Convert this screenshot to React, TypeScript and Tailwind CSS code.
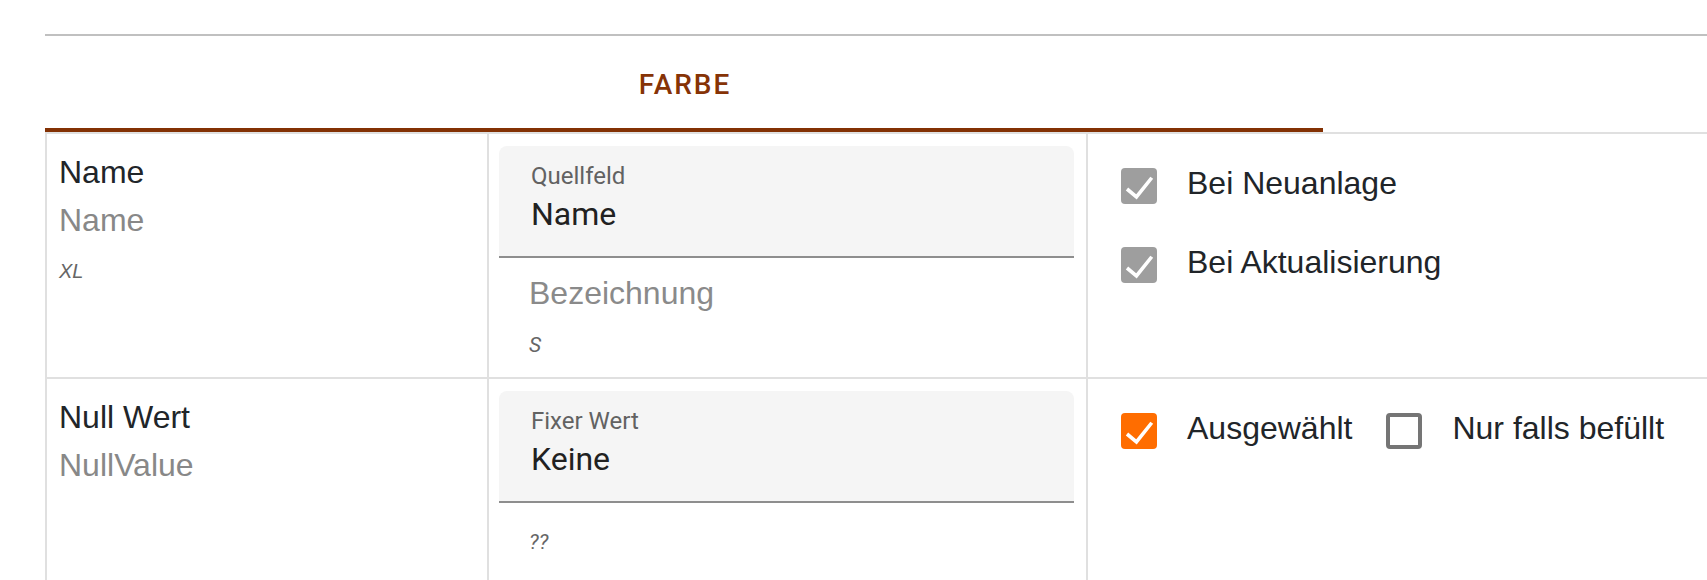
import React from 'react'

type CheckState = 'disabled' | 'checked' | 'unchecked'

interface MappingRow {
  title: string
  field: string
  size?: string
  label: string
  value: string
  placeholder?: string
  hint: string
  inline: boolean
  checks: { label: string; state: CheckState }[]
}

const rows: MappingRow[] = [
  {
    title: 'Name',
    field: 'Name',
    size: 'XL',
    label: 'Quellfeld',
    value: 'Name',
    placeholder: 'Bezeichnung',
    hint: 'S',
    inline: false,
    checks: [
      { label: 'Bei Neuanlage', state: 'disabled' },
      { label: 'Bei Aktualisierung', state: 'disabled' },
    ],
  },
  {
    title: 'Null Wert',
    field: 'NullValue',
    label: 'Fixer Wert',
    value: 'Keine',
    hint: '??',
    inline: true,
    checks: [
      { label: 'Ausgewählt', state: 'checked' },
      { label: 'Nur falls befüllt', state: 'unchecked' },
    ],
  },
]

function CheckBox({ state }: { state: CheckState }) {
  if (state === 'unchecked') {
    return <div className="w-[36px] h-[36px] shrink-0 rounded-[4px] border-[4px] border-[#757575] bg-white" />
  }
  return (
    <div
      className={`w-[36px] h-[36px] shrink-0 rounded-[4px] flex items-center justify-center ${
        state === 'checked' ? 'bg-[#ff6d00]' : 'bg-[#9e9e9e]'
      }`}
    >
      <svg viewBox="0 0 24 24" className="w-[36px] h-[36px]" fill="none">
        <polyline points="4,14 10.3,19.3 20.5,6.5" stroke="white" strokeWidth="2.4" />
      </svg>
    </div>
  )
}

function CheckItem({ label, state }: { label: string; state: CheckState }) {
  return (
    <div className="flex items-center gap-[30px] h-[48px]">
      <CheckBox state={state} />
      <span className="text-[32px] leading-[48px] pb-[6px] text-[#212529] whitespace-nowrap">{label}</span>
    </div>
  )
}

export default function App() {
  return (
    <div className="w-[1707px] h-[580px] overflow-hidden bg-white pl-[45px] pt-[34px] font-['Liberation_Sans',Arial,sans-serif]">
      {/* top rule */}
      <div className="h-[2px] bg-[#c0c0c0]" />

      {/* Tabs */}
      <div className="flex">
        <div className="w-[1278px] h-[96px] border-b-[4px] border-[#833104] flex items-center justify-center">
          <span className="font-['Roboto',sans-serif] font-medium text-[28px] tracking-[2px] text-[#863306] pl-[2px] pt-[6px]">
            FARBE
          </span>
        </div>
      </div>
      <div className="h-[2px] bg-[#e0e0e0]" />

      {/* Table */}
      <div className="grid grid-cols-[442px_599px_1fr]">
        {rows.map((row, i) => (
          <React.Fragment key={row.field}>
            {/* Field names */}
            <div className="border-l-2 border-b-2 border-[#e0e0e0] pl-[12px] pt-[14px]">
              <div className="text-[32px] leading-[48px] text-[#212529]">{row.title}</div>
              <div className="text-[32px] leading-[48px] text-[#888888]">{row.field}</div>
              {row.size && <div className="mt-[12px] text-[20px] leading-[30px] italic text-[#666666]">{row.size}</div>}
            </div>

            {/* Source field */}
            <div
              className={`border-l-2 border-b-2 border-[#e0e0e0] pl-[10px] pr-[12px] pt-[12px] pb-[17px] ${
                i === rows.length - 1 ? 'min-h-[260px]' : ''
              }`}
            >
              <div className="h-[112px] bg-[#f5f5f5] rounded-t-[8px] border-b-2 border-[#8e8e8e] pl-[32px] pt-[18px] font-['Roboto',sans-serif]">
                <div className="text-[24px] leading-[24px] text-[#626262]">{row.label}</div>
                <div className="mt-[10px] text-[32px] leading-[32px] text-[#212121]">{row.value}</div>
              </div>
              <div className="pl-[30px] pt-[11px]">
                {row.placeholder && (
                  <div className="text-[32px] leading-[48px] text-[#8a8a8a]">{row.placeholder}</div>
                )}
                <div className="mt-[13px] text-[21px] leading-[30px] italic text-[#666666] font-['Roboto',sans-serif]">
                  {row.hint}
                </div>
              </div>
            </div>

            {/* Options */}
            <div className="border-l-2 border-b-2 border-[#e0e0e0] pl-[33px] pt-[28px]">
              {row.inline ? (
                <div className="flex gap-[34px]">
                  {row.checks.map((c) => (
                    <CheckItem key={c.label} label={c.label} state={c.state} />
                  ))}
                </div>
              ) : (
                <div className="flex flex-col gap-[31px]">
                  {row.checks.map((c) => (
                    <CheckItem key={c.label} label={c.label} state={c.state} />
                  ))}
                </div>
              )}
            </div>
          </React.Fragment>
        ))}
      </div>
    </div>
  )
}
